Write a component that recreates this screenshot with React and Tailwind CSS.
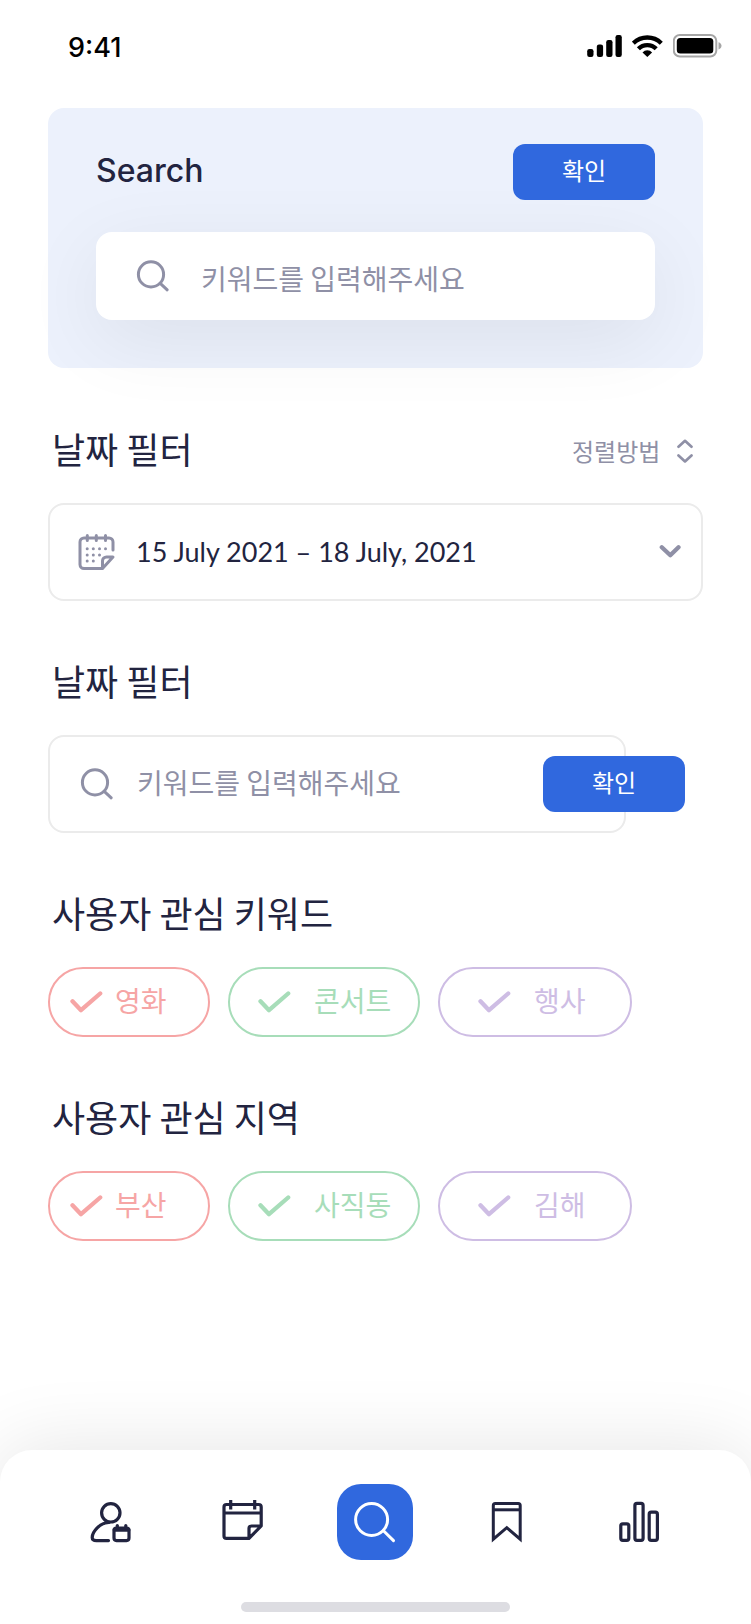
import React, { useState } from "react";

const keywords = [
    { label: "영화", color: "border-[#f6a5a5] text-[#f6a5a5]", size: "w-[162px] pl-5 gap-3" },
    { label: "콘서트", color: "border-[#a7ddb9] text-[#a7ddb9]", size: "w-[192px] pl-7 gap-[23px]" },
    { label: "행사", color: "border-[#cebde4] text-[#cebde4]", size: "w-[194px] pl-[38px] gap-[23px]" },
];

const regions = [
    { label: "부산", color: "border-[#f6a5a5] text-[#f6a5a5]", size: "w-[162px] pl-5 gap-3" },
    { label: "사직동", color: "border-[#a7ddb9] text-[#a7ddb9]", size: "w-[192px] pl-7 gap-[23px]" },
    { label: "김해", color: "border-[#cebde4] text-[#cebde4]", size: "w-[194px] pl-[38px] gap-[23px]" },
];

const SearchIcon = () => (
    <svg width="34" height="34" viewBox="0 0 34 34" fill="none" stroke="#8f90a6" strokeWidth="3" strokeLinecap="round" className="shrink-0">
        <circle cx="15" cy="15.4" r="12.6" />
        <path d="M24.8 24.8L31.2 30.8" />
    </svg>
);

const DateIcon = () => (
    <svg width="36" height="36" viewBox="0 0 36 36" fill="none" stroke="#8f90a6" strokeWidth="3" strokeLinecap="round" strokeLinejoin="round" className="shrink-0 overflow-visible">
        <path d="M34 16V8a4 4 0 0 0-4-4H5a4 4 0 0 0-4 4V30.5a4 4 0 0 0 4 4H23.5L34 23H27.5a4 4 0 0 0-4 4V34.5" />
        <path d="M8.3 1.5V6.5M17.3 1.5V6.5M26.5 1.5V6.5" />
        <g fill="#8f90a6" stroke="none">
            <circle cx="8.2" cy="14.7" r="1.5" />
            <circle cx="14.3" cy="14.7" r="1.5" />
            <circle cx="20.5" cy="14.7" r="1.5" />
            <circle cx="26.5" cy="14.7" r="1.5" />
            <circle cx="8.2" cy="20.9" r="1.5" />
            <circle cx="14.3" cy="20.9" r="1.5" />
            <circle cx="20.5" cy="20.9" r="1.5" />
            <circle cx="8.2" cy="27.1" r="1.5" />
            <circle cx="14.3" cy="27.1" r="1.5" />
        </g>
    </svg>
);

const StatusBar = () => (
    <header className="flex items-center justify-between pt-[26px] pb-[38px] pl-[68px] pr-7">
        <span className="font-[Inter] text-[27px] leading-[44px] font-medium text-black">9:41</span>

        <div className="flex items-center gap-[9px] mb-1">
            {/* signal */}
            <svg width="36" height="24" viewBox="0 0 36 24" fill="#000">
                <rect x="0.2" y="15" width="6.3" height="8" rx="2.2" />
                <rect x="9.8" y="10.5" width="6.3" height="12.5" rx="2.2" />
                <rect x="19.2" y="6" width="6.3" height="17" rx="2.2" />
                <rect x="28.5" y="1" width="6.3" height="22" rx="2.2" />
            </svg>

            {/* wifi */}
            <svg width="32" height="24" viewBox="0 0 32 24" fill="none" stroke="#000" strokeWidth="4.3">
                <path d="M1.3 9.2A20 20 0 0 1 29.3 9.2" />
                <path d="M6.4 14.8A12.4 12.4 0 0 1 24.2 14.8" />
                <path d="M15.3 23L10.5 18.4A6.5 6.5 0 0 1 20.1 18.4Z" fill="#000" stroke="none" />
            </svg>

            {/* battery */}
            <svg width="50" height="24" viewBox="0 0 50 24" fill="none">
                <rect x="0.8" y="1" width="42.5" height="21.5" rx="6" stroke="#a6a6a6" strokeWidth="2" />
                <rect x="3.8" y="4" width="36.5" height="15.5" rx="3.5" fill="#000" />
                <path d="M45.5 8.2C47.5 8.8 48.5 10.2 48.5 11.8S47.5 14.8 45.5 15.4Z" fill="#a6a6a6" />
            </svg>
        </div>
    </header>
);

const ConfirmButton = ({ className = "" }) => (
    <button
        type="submit"
        className={`w-[142px] h-14 shrink-0 rounded-xl bg-[#3068de] text-2xl text-white pb-1 ${className}`}
    >
        확인
    </button>
);

const Title = ({ children }) => (
    <h2 className="pl-1 pb-1.5 text-4xl leading-[50px] font-normal">{children}</h2>
);

const Chip = ({ item }) => {

    const [checked, setChecked] = useState(true);

    return (
        <label className={`h-[70px] flex items-center rounded-full border-2 text-[28px] leading-9 cursor-pointer ${item.color} ${item.size}`}>
            <input
                type="checkbox"
                className="sr-only"
                checked={checked}
                onChange={() => setChecked(!checked)}
            />
            <svg width="33" height="22" viewBox="0 0 33 22" fill="none" stroke="currentColor" strokeWidth="4.3" strokeLinecap="round" strokeLinejoin="round" className={checked ? "shrink-0" : "shrink-0 opacity-30"}>
                <path d="M2.5 10.3L11 19.2L30.2 2.5" />
            </svg>
            <span className="pb-1">{item.label}</span>
        </label>
    );
};

const BottomNav = () => (
    <nav className="rounded-t-[32px] bg-white pt-[34px] pb-3 shadow-[0_0_80px_rgba(0,0,0,0.11)]">

        <div className="grid grid-cols-5 items-center px-[45px]">

            {/* profile */}
            <a href="#profile" aria-label="프로필" className="flex justify-center">
                <svg width="42" height="42" viewBox="0 0 42 42" fill="none" stroke="#222440" strokeWidth="3.2" strokeLinecap="round" strokeLinejoin="round">
                    <circle cx="20.8" cy="11.8" r="9.2" />
                    <path d="M19 21.5C10 21.5 2.2 31 2.2 36.5Q2.2 39.6 6.5 39.6H18.5" />
                    <rect x="24" y="27" width="15" height="12.6" rx="2.5" />
                    <path d="M24.5 28.8H38.6" strokeWidth="3.8" />
                    <path d="M27.3 24.5V27M35.8 24.5V27" />
                </svg>
            </a>

            {/* calendar */}
            <a href="#calendar" aria-label="캘린더" className="flex justify-center">
                <svg width="42" height="42" viewBox="0 0 42 42" fill="none" stroke="#222440" strokeWidth="3.2" strokeLinejoin="round" className="overflow-visible">
                    <path d="M27 37.4H4.5a2.5 2.5 0 0 1-2.5-2.5V6A2.5 2.5 0 0 1 4.5 3.5H36.7A2.5 2.5 0 0 1 39.2 6V25L27 37.4V27.5A2.5 2.5 0 0 1 29.5 25H39.2" />
                    <path d="M2 12H39.2M8.7 -1V8.4M32.7 -1V8.4" />
                </svg>
            </a>

            {/* search */}
            <a href="#search" aria-label="검색" className="w-[76px] h-[76px] justify-self-center flex items-center justify-center rounded-3xl bg-[#3068de]">
                <svg width="42" height="42" viewBox="0 0 42 42" fill="none" stroke="#fff" strokeWidth="3" strokeLinecap="round">
                    <circle cx="17.6" cy="18.5" r="16" />
                    <path d="M29.5 29.8L39.5 39.6" />
                </svg>
            </a>

            {/* bookmark */}
            <a href="#bookmark" aria-label="북마크" className="flex justify-center">
                <svg width="42" height="42" viewBox="0 0 42 42" fill="none" stroke="#222440" strokeWidth="3">
                    <path d="M6.3 38.2V4.5A2 2 0 0 1 8.3 2.5H31.2A2 2 0 0 1 33.2 4.5V38.2L19.8 26.7Z" />
                    <path d="M6.3 8.8H33.2" />
                </svg>
            </a>

            {/* stats */}
            <a href="#stats" aria-label="통계" className="flex justify-center">
                <svg width="42" height="42" viewBox="0 0 42 42" fill="none" stroke="#222440" strokeWidth="3.2">
                    <rect x="1.8" y="22.8" width="8" height="16.5" rx="2" />
                    <rect x="15.9" y="2.4" width="8.2" height="36.9" rx="2" />
                    <rect x="30.2" y="11.2" width="8.2" height="28.1" rx="2" />
                </svg>
            </a>

        </div>

        <div className="w-[269px] h-2.5 mt-[42px] mx-auto rounded-full bg-[#dddde2]"></div>

    </nav>
);

const App = () => {

    const [cardKeyword, setCardKeyword] = useState("");
    const [filterKeyword, setFilterKeyword] = useState("");

    const stopSubmit = (e) => e.preventDefault();

    return (
        <div className="min-h-screen flex flex-col overflow-x-hidden bg-white text-[#222440] font-['Noto_Sans_CJK_KR',sans-serif]">

            <StatusBar />

            <main className="flex-1 px-12">

                {/* Search card */}
                <form onSubmit={stopSubmit} className="rounded-2xl bg-[#ecf1fc] px-12 pt-9 pb-12">

                    <div className="flex items-center justify-between mb-8">
                        <h1 className="font-[Inter] text-[32px] leading-[54px] pb-0.5 font-medium">Search</h1>
                        <ConfirmButton />
                    </div>

                    <label className="h-[88px] flex items-center gap-[31px] rounded-2xl bg-white pl-10 pr-6 shadow-[0_20px_80px_rgba(0,0,0,0.07)]">
                        <SearchIcon />
                        <input
                            type="text"
                            aria-label="키워드"
                            value={cardKeyword}
                            onChange={(e) => setCardKeyword(e.target.value)}
                            placeholder="키워드를 입력해주세요"
                            className="flex-1 min-w-0 h-12 pt-1 text-[28px] outline-none placeholder:text-[#8f90a6]"
                        />
                    </label>

                </form>

                <div className="flex flex-col gap-[54px] mt-[55px]">

                    {/* Date filter */}
                    <section>
                        <div className="flex items-center justify-between mb-6">
                            <Title>날짜 필터</Title>

                            <label className="flex items-center gap-4 pr-[10px] text-[#8f90a6]">
                                <select aria-label="정렬방법" className="appearance-none bg-transparent text-2xl outline-none">
                                    <option>정렬방법</option>
                                </select>
                                <svg width="16" height="24" viewBox="0 0 16 24" fill="none" stroke="currentColor" strokeWidth="2.7" strokeLinecap="round" strokeLinejoin="round">
                                    <path d="M1.5 7.7L8 1.8L14.5 7.7M1.5 16.5L8 22.4L14.5 16.5" />
                                </svg>
                            </label>
                        </div>

                        <label className="h-[98px] flex items-center rounded-2xl border-2 border-[#ebebeb] pl-[29px] pr-5">
                            <DateIcon />
                            <select aria-label="날짜" className="flex-1 min-w-0 ml-[21px] appearance-none bg-transparent font-[Lato] text-[27px] outline-none">
                                <option>15 July 2021 – 18 July, 2021</option>
                            </select>
                            <svg width="22" height="14" viewBox="0 0 22 14" fill="none" stroke="#8f90a6" strokeWidth="4.3" strokeLinecap="round" strokeLinejoin="round" className="shrink-0">
                                <path d="M2.8 2.3L11.3 10.3L19.5 2.3" />
                            </svg>
                        </label>
                    </section>

                    {/* Keyword filter */}
                    <section>
                        <Title>날짜 필터</Title>

                        <form onSubmit={stopSubmit} className="flex items-center mt-6">
                            <label className="flex-1 min-w-0 h-[98px] flex items-center gap-[23px] rounded-2xl border-2 border-[#ebebeb] pl-[30px] pr-24">
                                <SearchIcon />
                                <input
                                    type="text"
                                    aria-label="키워드 필터"
                                    value={filterKeyword}
                                    onChange={(e) => setFilterKeyword(e.target.value)}
                                    placeholder="키워드를 입력해주세요"
                                    className="flex-1 min-w-0 h-12 pb-1 text-[28px] outline-none placeholder:text-[#8f90a6]"
                                />
                            </label>
                            <ConfirmButton className="-ml-[83px] mr-[18px] z-10" />
                        </form>
                    </section>

                    {/* Keywords */}
                    <section>
                        <Title>사용자 관심 키워드</Title>
                        <div className="flex flex-wrap gap-[18px] mt-6">
                            {keywords.map((item) => (
                                <Chip key={item.label} item={item} />
                            ))}
                        </div>
                    </section>

                    {/* Regions */}
                    <section>
                        <Title>사용자 관심 지역</Title>
                        <div className="flex flex-wrap gap-[18px] mt-6">
                            {regions.map((item) => (
                                <Chip key={item.label} item={item} />
                            ))}
                        </div>
                    </section>

                </div>

            </main>

            <BottomNav />

        </div>
    );
};

export default App;
